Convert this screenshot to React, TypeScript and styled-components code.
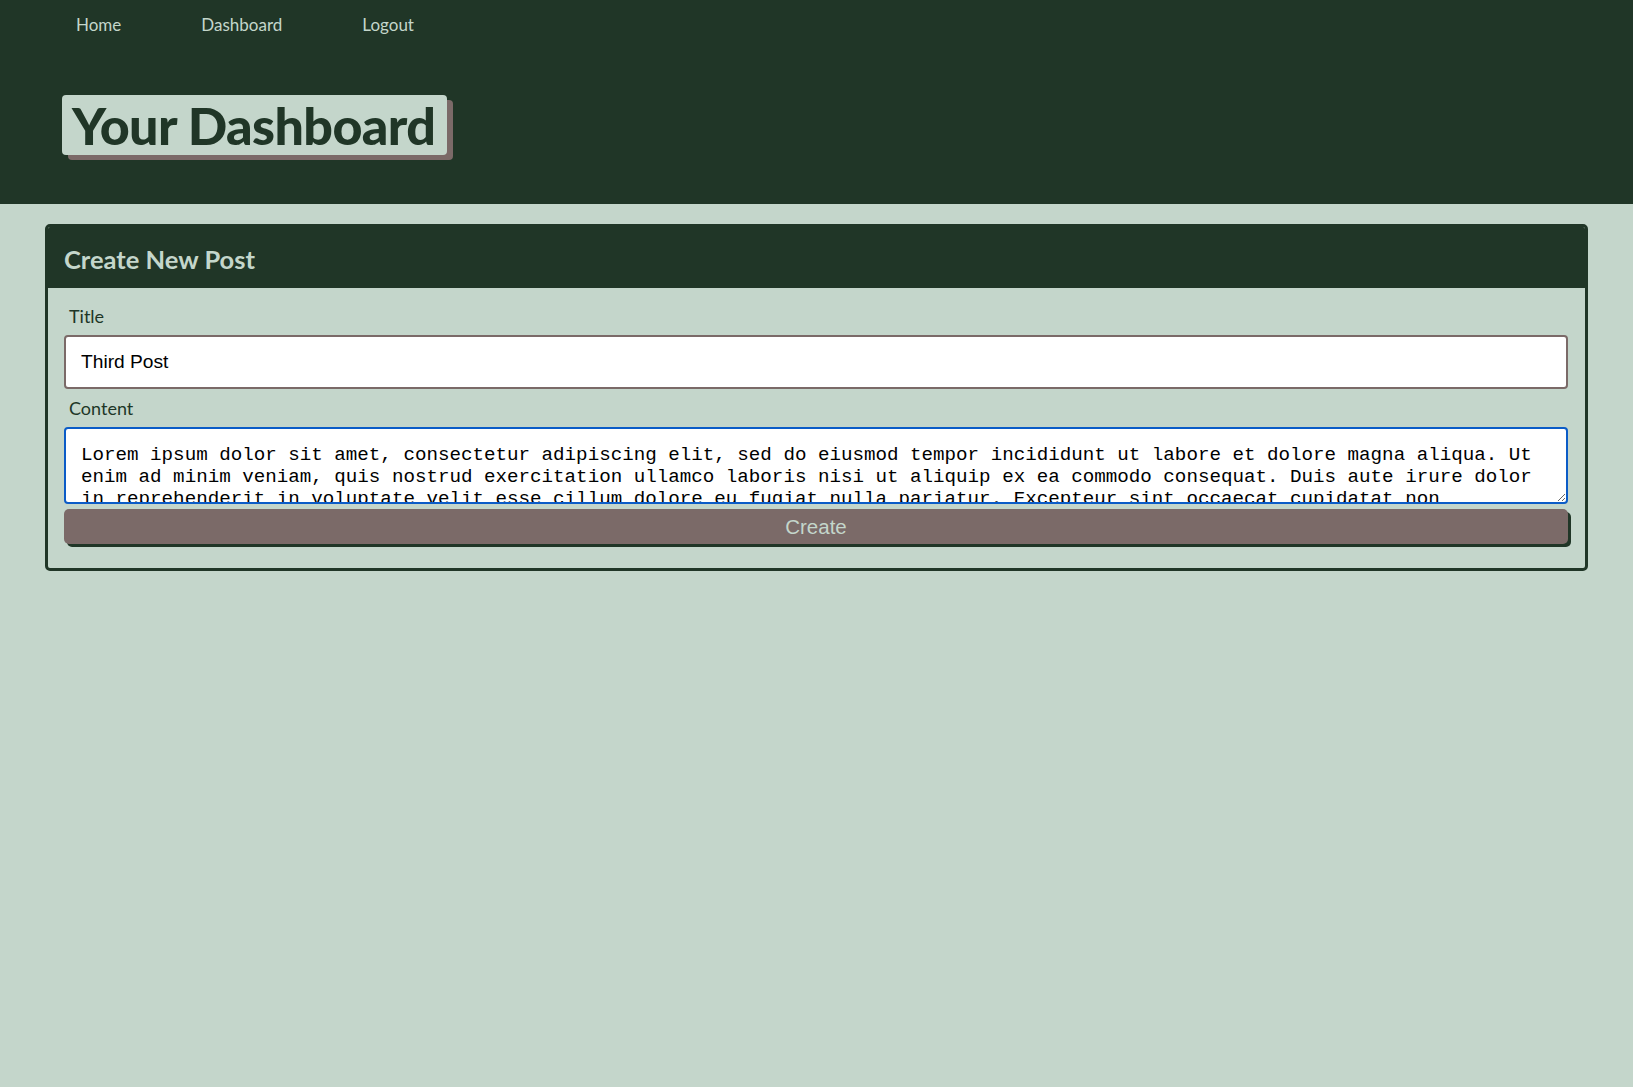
import styled, { createGlobalStyle } from "styled-components";

const LOREM =
  "Lorem ipsum dolor sit amet, consectetur adipiscing elit, sed do eiusmod tempor incididunt ut labore et dolore magna aliqua. Ut enim ad minim veniam, quis nostrud exercitation ullamco laboris nisi ut aliquip ex ea commodo consequat. Duis aute irure dolor in reprehenderit in voluptate velit esse cillum dolore eu fugiat nulla pariatur. Excepteur sint occaecat cupidatat non proident, sunt in culpa qui officia deserunt mollit anim id est laborum.";

const navLinks = ["Home", "Dashboard", "Logout"];

export default function App() {
  return (
    <>
      <GlobalStyle />
      <Header>
        <Nav>
          {navLinks.map((link) => (
            <NavLink key={link} href="#">
              {link}
            </NavLink>
          ))}
        </Nav>
        <PageTitle>Your Dashboard</PageTitle>
      </Header>

      <Main>
        <Card>
          <CardHeader>
            <CardTitle>Create New Post</CardTitle>
          </CardHeader>
          <Form onSubmit={(e) => e.preventDefault()}>
            <Label htmlFor="title">Title</Label>
            <TitleInput id="title" type="text" defaultValue="Third Post" />
            <Label htmlFor="content">Content</Label>
            <ContentArea id="content" rows={2} defaultValue={LOREM} $active />
            <SubmitButton type="submit">Create</SubmitButton>
          </Form>
        </Card>
      </Main>
    </>
  );
}

const GlobalStyle = createGlobalStyle`
  html, body {
    margin: 0;
    padding: 0;
    background: #c4d6cb;
    font-family: Lato, "Noto Sans", sans-serif;
  }

  * {
    box-sizing: border-box;
  }
`;

const Header = styled.header`
  background: #203627;
  padding: 14px 0 49px 62px;
  display: flex;
  flex-direction: column;
  align-items: flex-start;
  gap: 59px;
`;

const Nav = styled.nav`
  display: flex;
  gap: 80px;
  padding-left: 14px;
`;

const NavLink = styled.a`
  color: #c4d6cb;
  font-size: 17px;
  line-height: 22px;
  text-decoration: none;
`;

const PageTitle = styled.h1`
  margin: 0;
  padding: 2px 12px 2px 10px;
  background: #c4d6cb;
  color: #203627;
  font-size: 52px;
  font-weight: 900;
  line-height: 56px;
  letter-spacing: -0.6px;
  border-radius: 4px;
  box-shadow: 6px 5px 0 #7b6a68;
`;

const Main = styled.main`
  padding: 20px 45px;
`;

const Card = styled.section`
  border: 3px solid #203627;
  border-radius: 5px;
  overflow: hidden;
`;

const CardHeader = styled.div`
  background: #203627;
  height: 61px;
  display: flex;
  align-items: center;
  padding: 2px 16px 0;
`;

const CardTitle = styled.h2`
  margin: 0;
  color: #c4d6cb;
  font-size: 25.5px;
  font-weight: 700;
`;

const Form = styled.form`
  display: flex;
  flex-direction: column;
  padding: 17px 17px 24px 16px;
`;

const Label = styled.label`
  color: #203627;
  font-size: 18px;
  line-height: 22px;
  margin: 0 0 8px 5px;
`;

const TitleInput = styled.input`
  width: 100%;
  height: 54px;
  margin-bottom: 8px;
  padding: 0 15px;
  border: 2px solid #7b6a68;
  border-radius: 4px;
  background: #ffffff;
  color: #000000;
  font-family: "Liberation Sans", Arial, sans-serif;
  font-size: 19.2px;
  outline: none;
`;

const ContentArea = styled.textarea<{ $active?: boolean }>`
  width: 100%;
  height: 77px;
  padding: 15px;
  border: 2px solid ${(props) => (props.$active ? "#0b5cc7" : "#7b6a68")};
  border-radius: 4px;
  background: #ffffff;
  color: #000000;
  font-family: "Liberation Mono", "Courier New", monospace;
  font-size: 19.2px;
  line-height: normal;
  outline: none;
  overflow: hidden;
`;

const SubmitButton = styled.button`
  margin-top: 5px;
  height: 35px;
  border: none;
  border-radius: 5px;
  background: #7b6a68;
  color: #c4d6cb;
  font-family: "Liberation Sans", Arial, sans-serif;
  font-size: 20.5px;
  box-shadow: 3px 3px 0 #203627;
  cursor: pointer;
`;
